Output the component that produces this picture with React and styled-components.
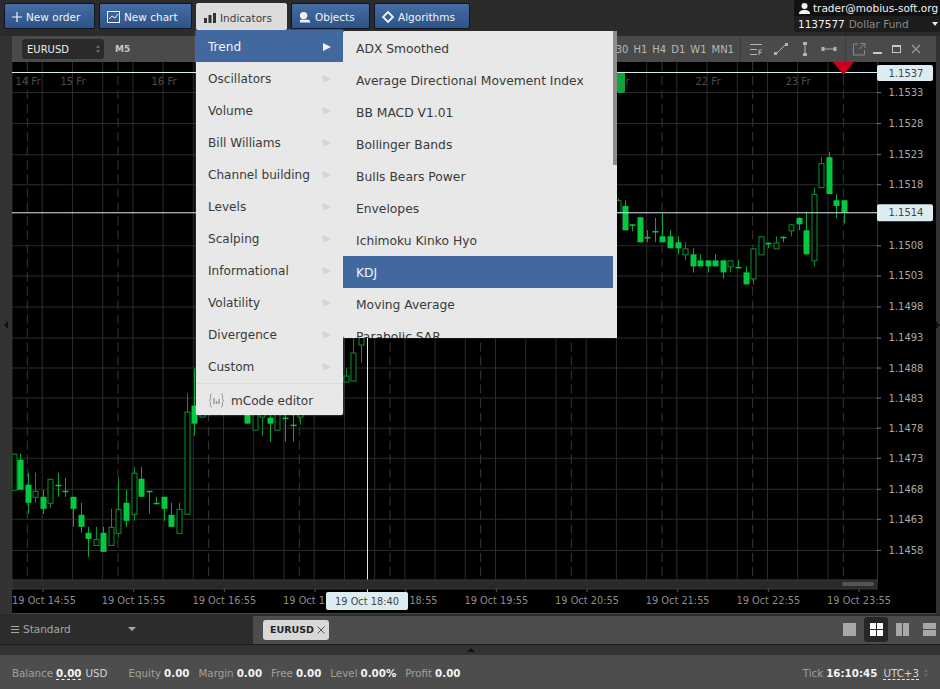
import React from 'react';
import styled, { createGlobalStyle } from 'styled-components';

const GlobalStyle = createGlobalStyle`
  html, body { margin: 0; padding: 0; height: 100%; background: #2b2b2b; }
  * { box-sizing: border-box; }
`;

const FONT = '"DejaVu Sans", Verdana, sans-serif';

const Page = styled.div`
  width: 940px;
  height: 689px;
  display: flex;
  flex-direction: column;
  overflow: hidden;
  background: #2b2b2b;
  font-family: ${FONT};
`;

const TopBar = styled.header`
  height: 36px;
  flex: none;
  display: flex;
  justify-content: space-between;
  background: #2b2b2b;
`;

const Nav = styled.nav`
  display: flex;
  gap: 4px;
  padding: 3px 0 0 4px;
`;

const NavItem = styled.div`
  position: relative;
  width: ${(p) => p.$w}px;
  height: ${(p) => (p.$open ? 27 : 26)}px;
`;

const NavButton = styled.button`
  width: 100%;
  height: 100%;
  display: flex;
  align-items: center;
  gap: 4px;
  padding: 2px 0 0 7px;
  font: 10.5px ${FONT};
  color: ${(p) => (p.$open ? '#3c3c3c' : '#f0f4f8')};
  background: ${(p) => (p.$open ? '#dcdcdc' : 'linear-gradient(#456da3, #2d5488)')};
  border: 1px solid ${(p) => (p.$open ? '#dcdcdc' : '#10161f')};
  border-radius: 2px;

  svg {
    flex: none;
  }
`;

const Account = styled.div`
  width: 146px;
  height: 32px;
  background: #111;
  color: #f2f2f2;
  font-size: 10.5px;
`;

const UserRow = styled.div`
  height: 16px;
  display: flex;
  align-items: center;
  gap: 3px;
  padding-left: 5px;
  white-space: nowrap;

  svg {
    flex: none;
  }
`;

const FundRow = styled.div`
  height: 16px;
  display: flex;
  align-items: center;
  gap: 4px;
  padding-left: 4px;
  position: relative;
  background: #1d1d1d;
  font-size: 10.5px;
`;

const FundName = styled.span`
  color: #8a8a8a;
`;

const Caret = styled.span`
  display: block;
  width: 0;
  height: 0;
  border-left: ${(p) => p.$size || 3}px solid transparent;
  border-right: ${(p) => p.$size || 3}px solid transparent;
  border-top: ${(p) => p.$size || 4}px solid ${(p) => p.$color || '#eee'};
`;

const FundCaret = styled(Caret)`
  position: absolute;
  right: 2px;
  top: 6px;
`;

const Workspace = styled.main`
  flex: 1;
  min-height: 0;
  display: flex;
`;

const SideStrip = styled.div`
  width: ${(p) => p.$w}px;
  flex: none;
  display: flex;
  align-items: center;
  justify-content: center;
  background: #333;
`;

const SideArrow = styled.span`
  display: block;
  width: 0;
  height: 0;
  border-top: 4px solid transparent;
  border-bottom: 4px solid transparent;
  ${(p) => (p.$left ? 'border-right: 4px solid #111;' : 'border-left: 4px solid #111;')}
`;

const ChartWindow = styled.section`
  flex: 1;
  min-width: 0;
  display: flex;
  flex-direction: column;
`;

const ChartHeader = styled.div`
  height: 26px;
  flex: none;
  display: flex;
  align-items: center;
  padding-left: 10px;
  background: #4a4a4a;
  font-size: 10px;
  color: #c4c4c4;
`;

const SymbolSelect = styled.div`
  width: 82px;
  height: 20px;
  display: flex;
  align-items: center;
  justify-content: space-between;
  padding: 0 4px 0 5px;
  border-radius: 3px;
  background: #2a2a2a;
  color: #eee;
  font-size: 10px;
`;

const SpinnerBox = styled.span`
  display: flex;
  flex-direction: column;
  gap: 2px;
`;

const SpinUp = styled.span`
  display: block;
  width: 0;
  height: 0;
  border-left: 2.5px solid transparent;
  border-right: 2.5px solid transparent;
  border-bottom: 3px solid ${(p) => p.$color || '#666'};
`;

const SpinDown = styled.span`
  display: block;
  width: 0;
  height: 0;
  border-left: 2.5px solid transparent;
  border-right: 2.5px solid transparent;
  border-top: 3px solid ${(p) => p.$color || '#666'};
`;

const Period = styled.span`
  margin-left: 11px;
  font-weight: bold;
  font-size: 9px;
`;

const Spacer = styled.div`
  flex: 1;
`;

const Periods = styled.div`
  display: flex;
  gap: 5px;
  padding-right: 6px;
  height: 100%;
  align-items: center;
  color: #b8b8b8;
`;

const ToolGroup = styled.div`
  height: 100%;
  display: flex;
  align-items: center;
  gap: ${(p) => p.$gap || 10}px;
  padding: 0 ${(p) => p.$pr || 10}px 0 ${(p) => p.$pl || 9}px;
  border-left: 1px solid #3c3c3c;
`;

const ChartArea = styled.div`
  flex: 1;
  min-height: 0;
  background: #000;
  border-bottom: 1px solid #444;
`;

const ChartSvg = styled.svg`
  display: block;
  width: 100%;
  height: 100%;
  font-family: ${FONT};
`;

const TabBar = styled.div`
  height: 31px;
  flex: none;
  display: flex;
  border-top: 2px solid #2b2b2b;
  border-bottom: 1px solid #1a1a1a;
  background: #4d4d4d;
`;

const SchemePicker = styled.div`
  width: 253px;
  flex: none;
  display: flex;
  align-items: center;
  padding: 0 0 2px 11px;
  background: #2d2d2d;
  color: #a6a6a6;
  font-size: 10.5px;
`;

const SchemeName = styled.span`
  margin-left: 4px;
  width: 105px;
`;

const TabStrip = styled.div`
  flex: 1;
  display: flex;
  align-items: center;
  justify-content: space-between;
  padding: 0 4px 1px 10px;
`;

const ChartTab = styled.div`
  width: 66px;
  height: 20px;
  display: flex;
  align-items: center;
  justify-content: space-between;
  padding: 0 3px 0 7px;
  border-radius: 3px;
  background: #d8d8d8;
  color: #222;
  font-size: 9.5px;
  font-weight: bold;
`;

const LayoutSwitch = styled.div`
  display: flex;
  align-items: center;
  gap: 8px;
`;

const LayoutButton = styled.div`
  width: ${(p) => (p.$active ? 24 : 13)}px;
  height: 25px;
  display: flex;
  align-items: center;
  justify-content: center;
  border-radius: 3px;
  margin-right: ${(p) => p.$after || 0}px;
  background: ${(p) => (p.$active ? '#262626' : 'transparent')};
`;

const Divider = styled.div`
  height: 10px;
  flex: none;
  display: flex;
  justify-content: center;
  align-items: center;
  background: #333;
  padding-left: 2px;
`;

const DividerArrow = styled.span`
  display: block;
  width: 0;
  height: 0;
  border-left: 4px solid transparent;
  border-right: 4px solid transparent;
  border-bottom: 4px solid #111;
`;

const StatusBar = styled.footer`
  height: 34px;
  flex: none;
  display: flex;
  align-items: center;
  justify-content: space-between;
  padding: 2px 12px 0;
  background: #4d4d4d;
  font-size: 10.3px;
  color: #a0a0a0;
`;

const StatGroup = styled.div`
  display: flex;
  align-items: center;
  gap: 9px;
`;

const Stat = styled.span`
  display: flex;
  gap: 3px;
  white-space: nowrap;
  margin-right: ${(p) => p.$after || 0}px;
`;

const StatValue = styled.b`
  color: #f4f4f4;
  ${(p) => p.$dashed && 'border-bottom: 1px dashed #f4f4f4;'}
`;

const Unit = styled.span`
  color: #d2d2d2;
  margin-left: 1px;
  ${(p) => p.$dashed && 'border-bottom: 1px dashed #e4e4e4;'}
`;

const TimeZone = styled.span`
  display: flex;
  align-items: center;
  gap: 5px;
  margin-left: -4px;
`;

const Dropdown = styled.div`
  position: absolute;
  z-index: 5;
  top: 100%;
  left: 0;
  width: 147px;
  height: 385px;
  background: #e8e8e8;
  border-radius: 0 0 2px 2px;
  box-shadow: 0 0 2px rgba(255, 255, 255, 0.6);
`;

const MenuRow = styled.div`
  height: 32px;
  display: flex;
  align-items: center;
  justify-content: space-between;
  padding: 2px 12px 0;
  font-size: 12.1px;
  color: ${(p) => (p.$active ? '#f2f5fa' : '#3a3a3a')};
  background: ${(p) => (p.$active ? '#41699f' : 'transparent')};
  white-space: nowrap;
`;

const MenuArrow = styled.span`
  display: block;
  width: 0;
  height: 0;
  border-top: 4px solid transparent;
  border-bottom: 4px solid transparent;
  border-left: 8px solid ${(p) => (p.$active ? '#f2f5fa' : '#d4d4d4')};
`;

const EditorRow = styled(MenuRow)`
  justify-content: flex-start;
  gap: 6px;
  margin-top: 1px;
  border-top: 1px solid #dcdcdc;
`;

const Submenu = styled.div`
  position: absolute;
  z-index: 6;
  top: 28px;
  left: 147px;
  width: 274px;
  height: 307px;
  padding-top: 1px;
  overflow: hidden;
  background: #e8e8e8;
  border-radius: 2px 0 0 2px;
`;

const SubThumb = styled.div`
  position: absolute;
  right: 0;
  top: 0;
  width: 4px;
  height: 134px;
  background: #8c8c8c;
`;

const SubRow = styled(MenuRow)`
  width: 270px;
  padding: 2px 13px 0;
  font-size: 12.3px;
`;

const topItems = ['Oscillators', 'Volume', 'Bill Williams', 'Channel building', 'Levels', 'Scalping', 'Informational', 'Volatility', 'Divergence', 'Custom'];
const trendItems = ['ADX Smoothed', 'Average Directional Movement Index', 'BB MACD V1.01', 'Bollinger Bands', 'Bulls Bears Power', 'Envelopes', 'Ichimoku Kinko Hyo', 'KDJ', 'Moving Average', 'Parabolic SAR'];

// x index, body top, body bottom, wick top, wick bottom, hollow
const candles = [
  [-0.8, 453, 489, 453, 489, 1], [0, 459, 489, 453, 489], [1, 484, 502, 472, 513], [2, 490, 496, 472, 502, 1],
  [3, 496, 508, 489, 513], [4, 478, 502, 478, 507, 1], [5, 484, 485, 472, 496], [6, 490, 491, 477, 496],
  [7, 496, 508, 496, 526], [8, 514, 526, 502, 532], [9, 532, 538, 526, 556], [10, 538, 544, 526, 544, 1],
  [11, 532, 551, 526, 551], [12, 526, 544, 508, 544, 1], [13, 508, 532, 477, 537, 1], [14, 502, 520, 489, 526],
  [15, 472, 513, 466, 520, 1], [16, 478, 496, 466, 496], [17, 490, 491, 490, 513], [18, 502, 503, 496, 503],
  [19, 496, 508, 496, 520], [20, 514, 526, 502, 526], [21, 508, 532, 502, 532, 1], [22, 411, 513, 393, 513, 1],
  [23, 405, 423, 368, 435], [24, 405, 416, 400, 416, 1],
  [30, 395, 423, 395, 423], [31, 395, 429, 390, 429, 1], [32, 405, 416, 400, 435, 1], [33, 417, 423, 400, 441],
  [34, 395, 429, 390, 429, 1], [35, 417, 418, 400, 441], [36, 424, 425, 405, 441], [37, 405, 416, 400, 424, 1],
  [43, 375, 381, 368, 381, 1], [44, 352, 380, 338, 380, 1], [45, 330, 344, 320, 362, 1],
];

const rightCandles = [
  [618, 200, 212, 198, 212, 1], [624.7, 205.7, 230, 200, 230], [632.3, 224, 225, 224, 231], [640, 217, 242, 217, 242],
  [647.3, 236.7, 237.7, 230, 242], [654.7, 230.7, 231.7, 217.7, 242], [662.3, 236, 242, 213, 242], [670, 236, 248, 230, 248],
  [677.7, 242, 248, 236, 254], [685, 248, 254, 242, 260, 1], [692.7, 254, 266, 248, 272], [700.3, 260, 266, 254, 266],
  [707.7, 260, 266, 260, 272], [715.3, 260, 266, 254, 266], [722.7, 260, 272, 260, 278], [730.3, 260, 266, 260, 272, 1],
  [738, 266.5, 267.5, 260, 267], [745.7, 272, 284, 266, 284], [753, 248, 278, 248, 284, 1], [760.7, 236, 254, 236, 254, 1],
  [768.3, 242.5, 243.5, 242, 248], [775.7, 242, 248, 236, 248, 1], [783.3, 236.5, 237.5, 236, 242], [791, 224, 230, 224, 236, 1],
  [798.7, 217.7, 224, 217, 230], [806, 230, 254, 212, 254], [813.7, 193.7, 260, 187, 266, 1], [821, 163, 187, 157, 187, 1],
  [828.7, 157, 193.7, 152, 193.7], [836.3, 200, 205.7, 194, 218], [844, 200, 212, 200, 223],
];

const prices = [
  ['1.1533', 92], ['1.1528', 123], ['1.1523', 154], ['1.1518', 184], ['1.1508', 245], ['1.1503', 275], ['1.1498', 306],
  ['1.1493', 337], ['1.1488', 367], ['1.1483', 397], ['1.1478', 427], ['1.1473', 457], ['1.1468', 488], ['1.1463', 518], ['1.1458', 549],
];
const times = ['14:55', '15:55', '16:55', '17:55', '18:55', '19:55', '20:55', '21:55', '22:55', '23:55'];
const days = [['14 Fr', 28], ['15 Fr', 73], ['16 Fr', 164], ['21 Fr', 617], ['22 Fr', 708], ['23 Fr', 798]];

function Candle({ x, top, bottom, wickTop, wickBottom, hollow }) {
  const px = Math.round(x);
  const green = hollow ? '#0a8f30' : '#04c93f';
  return (
    <g>
      <line x1={px + 0.5} x2={px + 0.5} y1={wickTop} y2={wickBottom} stroke={hollow ? '#0a8f30' : '#08a838'} />
      {hollow ? (
        <rect x={px - 2} y={top + 0.5} width={5} height={bottom - top} fill="#000" stroke={green} />
      ) : (
        <rect x={px - 2.5} y={top} width={6} height={Math.max(bottom - top, 1.5)} fill={green} />
      )}
    </g>
  );
}

function Chart() {
  const verticals = [];
  for (let i = 0; i < 28; i++) verticals.push(12 + 30.22 * i);
  const dashed = [];
  for (let i = 0; i < 10; i++) dashed.push(27.3 + 90.67 * i);
  return (
    <ChartSvg viewBox="12 62 924 550" preserveAspectRatio="none">
      <rect x="12" y="62" width="924" height="550" fill="#000" />
      {verticals.map((x) => (
        <line key={x} x1={x} x2={x} y1="62" y2="580" stroke="#2c2c2c" />
      ))}
      {dashed.map((x) => (
        <line key={x} x1={x} x2={x} y1="62" y2="580" stroke="#383838" strokeDasharray="9 5" />
      ))}
      {prices.map(([p, y]) => (
        <line key={p} x1="12" x2="877" y1={y + 0.5} y2={y + 0.5} stroke="#2c2c2c" />
      ))}
      {days.map(([d, x]) => (
        <text key={d} x={x} y="85" fontSize="10" fill="#4c4c4c" textAnchor="middle">{d}</text>
      ))}
      {candles.map(([i, top, bottom, wickTop, wickBottom, hollow]) => (
        <Candle key={i} x={20 + 7.57 * i} top={top} bottom={bottom} wickTop={wickTop} wickBottom={wickBottom} hollow={hollow} />
      ))}
      {rightCandles.map(([x, top, bottom, wickTop, wickBottom, hollow]) => (
        <Candle key={x} x={x} top={top} bottom={bottom} wickTop={wickTop} wickBottom={wickBottom} hollow={hollow} />
      ))}
      <rect x="617" y="72" width="8" height="21" rx="2" fill="#0da33d" />
      <line x1="12" x2="877" y1="72.5" y2="72.5" stroke="#d8ecf0" />
      <line x1="12" x2="877" y1="212.5" y2="212.5" stroke="#d8ecf0" />
      <line x1="367.5" x2="367.5" y1="62" y2="592" stroke="#d8ecf0" />
      <path d="M833 62h21l-10.500 13z" fill="#c8001a" />

      <rect x="877" y="62" width="59" height="550" fill="#000" />
      <line x1="877.5" x2="877.5" y1="62" y2="580" stroke="#333" />
      {prices.map(([p, y]) => (
        <g key={p}>
          <line x1="877" x2="881" y1={y + 0.5} y2={y + 0.5} stroke="#777" />
          <text x="906" y={y + 4} fontSize="10" fill="#a8a8a8" textAnchor="middle">{p}</text>
        </g>
      ))}
      <rect x="877" y="65" width="56" height="16" rx="2" fill="#dcedf2" />
      <text x="906" y="77" fontSize="10" fill="#444" textAnchor="middle">1.1537</text>
      <rect x="877" y="204" width="56" height="17" rx="2" fill="#dcedf2" />
      <text x="906" y="216" fontSize="10" fill="#444" textAnchor="middle">1.1514</text>

      <rect x="12" y="579" width="865" height="9" fill="#2a2a2a" stroke="#3a3a3a" />
      <rect x="842" y="581" width="32" height="4" rx="2" fill="#555" />
      {times.map((t, i) => (
        <g key={t}>
          <line x1={43 + 90.67 * i} x2={43 + 90.67 * i} y1="588" y2="591" stroke="#555" />
          <text x={43 + 90.67 * i + (i === 0 ? 1 : 0)} y="603" fontSize="9.8" fill="#8c8c8c" textAnchor="middle">19 Oct {t}</text>
        </g>
      ))}
      <rect x="326" y="591" width="82" height="18" rx="2" fill="#dcedf2" />
      <text x="367" y="604" fontSize="9.8" fill="#444" textAnchor="middle">19 Oct 18:40</text>
    </ChartSvg>
  );
}

const ToolIcon = ({ children, w = 16 }) => (
  <svg width={w} height="16" viewBox={`0 0 ${w} 16`} fill="none" stroke="#b4b4b4" strokeWidth="1">{children}</svg>
);

function App() {
  return (
    <Page>
      <GlobalStyle />
      <TopBar>
        <Nav>
          <NavItem $w={91}>
            <NavButton>
              <svg width="10" height="10" viewBox="0 0 10 10" stroke="#eef2f7" strokeWidth="1.2"><path d="M5 0v10M0 5h10" /></svg>
              New order
            </NavButton>
          </NavItem>
          <NavItem $w={93}>
            <NavButton>
              <svg width="13" height="12" viewBox="0 0 13 12" fill="none" stroke="#eef2f7"><rect x="0.5" y="0.5" width="12" height="11" /><path d="M2 8l3-3 3 2 3-4" /></svg>
              New chart
            </NavButton>
          </NavItem>
          <NavItem $w={91} $open>
            <NavButton $open>
              <svg width="12" height="10" viewBox="0 0 12 10" fill="#333"><rect y="5" width="3" height="5" /><rect x="4.5" y="2" width="3" height="8" /><rect x="9" y="0" width="3" height="10" /></svg>
              Indicators
            </NavButton>
            <Dropdown>
              <MenuRow $active>Trend<MenuArrow $active /></MenuRow>
              {topItems.map((item) => (
                <MenuRow key={item}>{item}<MenuArrow /></MenuRow>
              ))}
              <EditorRow>
                <svg width="17" height="15" viewBox="0 0 17 15" fill="none" stroke="#989898"><path d="M4 1C2 1 2.500 2 2.500 4S2.500 7 1 7.500C2.500 8 2.500 9 2.500 11S2 14 4 14M13 1c2 0 1.500 1 1.500 3s0 3 1.500 3.500c-1.500.5-1.500 1.500-1.500 3.500s.5 3-1.500 3" /><path d="M6 5v6M8.500 8v3M11 6v5" strokeWidth="1.500" /></svg>
                mCode editor
              </EditorRow>
            </Dropdown>
            <Submenu>
              <SubThumb />
              {trendItems.map((item) => (
                <SubRow key={item} $active={item === 'KDJ'}>{item}</SubRow>
              ))}
            </Submenu>
          </NavItem>
          <NavItem $w={79}>
            <NavButton>
              <svg width="12" height="12" viewBox="0 0 13 12" fill="#eef2f7"><circle cx="5" cy="4.500" r="4" /><path d="M1 9h10l1.500 3H1z" /></svg>
              Objects
            </NavButton>
          </NavItem>
          <NavItem $w={96}>
            <NavButton>
              <svg width="12" height="12" viewBox="0 0 12 12" fill="none" stroke="#eef2f7" strokeWidth="1.800"><path d="M6 1l5 5-5 5-5-5z" /></svg>
              Algorithms
            </NavButton>
          </NavItem>
        </Nav>
        <Account>
          <UserRow>
            <svg width="11" height="11" viewBox="0 0 11 11" fill="#f2f2f2"><circle cx="5.500" cy="3" r="3" /><path d="M0 11c0-3 2-4 5.500-4s5.500 1 5.500 4z" /></svg>
            trader@mobius-soft.org
          </UserRow>
          <FundRow>
            1137577 <FundName>Dollar Fund</FundName>
            <FundCaret />
          </FundRow>
        </Account>
      </TopBar>

      <Workspace>
        <SideStrip $w={12}><SideArrow $left /></SideStrip>
        <ChartWindow>
          <ChartHeader>
            <SymbolSelect>
              EURUSD
              <SpinnerBox><SpinUp /><SpinDown /></SpinnerBox>
            </SymbolSelect>
            <Period>M5</Period>
            <Spacer />
            <Periods>
              <span>30</span><span>H1</span><span>H4</span><span>D1</span><span>W1</span><span>MN1</span>
            </Periods>
            <ToolGroup $gap={8} $pl={8} $pr={8}>
              <ToolIcon><path d="M1 3.500h12M1 8.500h7M1 13.500h7M10 9v5M10 9h3M10 11.500h2.500" /></ToolIcon>
              <ToolIcon><path d="M3 13L13 3" /><rect x="1.500" y="11.500" width="2" height="2" fill="#b4b4b4" /><rect x="12.500" y="2.500" width="2" height="2" fill="#b4b4b4" /></ToolIcon>
              <ToolIcon><path d="M8 3v10" /><rect x="6.500" y="1.500" width="3" height="2" fill="#b4b4b4" /><rect x="6.500" y="12.500" width="3" height="2" fill="#b4b4b4" /></ToolIcon>
              <ToolIcon><path d="M3 8h10" /><rect x="1" y="6.500" width="2" height="3" fill="#b4b4b4" /><rect x="13" y="6.500" width="2" height="3" fill="#b4b4b4" /></ToolIcon>
            </ToolGroup>
            <ToolGroup $gap={3} $pl={5} $pr={12}>
              <svg width="16" height="16" viewBox="0 0 16 16" fill="none" stroke="#8a8a8a"><path d="M7 3H2.500v11h11V9M9 2.500h5V7M14 2.500L8 8" /></svg>
              <svg width="16" height="16" viewBox="0 0 16 16" fill="none" stroke="#c8c8c8" strokeWidth="2"><path d="M3 12h9" /></svg>
              <svg width="16" height="16" viewBox="0 0 16 16" fill="none" stroke="#c8c8c8"><rect x="3.500" y="4.500" width="8" height="7" /><path d="M3.500 5.500h8" /></svg>
              <svg width="16" height="16" viewBox="0 0 16 16" fill="none" stroke="#9a9a9a" strokeWidth="1.200"><path d="M4 4l8 8M12 4l-8 8" /></svg>
            </ToolGroup>
          </ChartHeader>
          <ChartArea>
            <Chart />
          </ChartArea>
        </ChartWindow>
        <SideStrip $w={4}><SideArrow /></SideStrip>
      </Workspace>

      <TabBar>
        <SchemePicker>
          <svg width="8" height="9" viewBox="0 0 8 9" stroke="#a6a6a6"><path d="M0 1.500h8M0 4.500h8M0 7.500h8" /></svg>
          <SchemeName>Standard</SchemeName>
          <Caret $size={4} $color="#a6a6a6" />
        </SchemePicker>
        <TabStrip>
          <ChartTab>
            EURUSD
            <svg width="10" height="10" viewBox="0 0 10 10" stroke="#555"><path d="M1.500 1.500l7 7M8.500 1.500l-7 7" /></svg>
          </ChartTab>
          <LayoutSwitch>
            <LayoutButton>
              <svg width="13" height="13" fill="#a8a8a8"><rect width="13" height="13" /></svg>
            </LayoutButton>
            <LayoutButton $active>
              <svg width="13" height="13" fill="#fff"><rect width="6" height="6" /><rect x="7" width="6" height="6" /><rect y="7" width="6" height="6" /><rect x="7" y="7" width="6" height="6" /></svg>
            </LayoutButton>
            <LayoutButton $after={6}>
              <svg width="13" height="13" fill="#a8a8a8"><rect width="6" height="13" /><rect x="7" width="6" height="13" /></svg>
            </LayoutButton>
            <LayoutButton>
              <svg width="13" height="13" fill="#a8a8a8"><rect width="13" height="6" /><rect y="7" width="13" height="6" /></svg>
            </LayoutButton>
          </LayoutSwitch>
        </TabStrip>
      </TabBar>
      <Divider><DividerArrow /></Divider>

      <StatusBar>
        <StatGroup>
          <Stat $after={12}>Balance <StatValue $dashed>0.00</StatValue> <Unit>USD</Unit></Stat>
          <Stat>Equity <StatValue>0.00</StatValue></Stat>
          <Stat>Margin <StatValue>0.00</StatValue></Stat>
          <Stat>Free <StatValue>0.00</StatValue></Stat>
          <Stat>Level <StatValue>0.00%</StatValue></Stat>
          <Stat>Profit <StatValue>0.00</StatValue></Stat>
        </StatGroup>
        <StatGroup>
          <Stat>Tick <StatValue>16:10:45</StatValue></Stat>
          <TimeZone>
            <Unit $dashed>UTC+3</Unit>
            <SpinnerBox><SpinUp $color="#6a6a6a" /><SpinDown $color="#6a6a6a" /></SpinnerBox>
          </TimeZone>
        </StatGroup>
      </StatusBar>
    </Page>
  );
}

export default App;
